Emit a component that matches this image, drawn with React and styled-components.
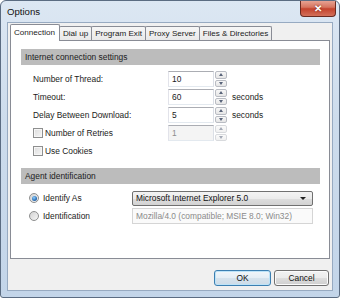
import React from 'react'
import styled, { createGlobalStyle } from 'styled-components'

const GlobalStyle = createGlobalStyle`
	html, body {
		margin: 0;
		padding: 0;
		background: #ffffff;
	}
	body {
		font-family: "Liberation Sans", Arial, sans-serif;
		font-size: 8.4px;
		color: #1b1b1b;
	}
	* {
		box-sizing: border-box;
	}
`

const Window = styled.div`
	width: 340px;
	height: 298px;
	border: 1px solid #5b6c82;
	border-radius: 6px 6px 3px 3px;
	background: linear-gradient(180deg, #dce7f3 0%, #cddcec 40%, #c3d5e9 100%);
	padding: 0 6px 6px 6px;
	display: flex;
	flex-direction: column;
	overflow: hidden;
`

const TitleBar = styled.div`
	height: 21px;
	display: flex;
	justify-content: space-between;
	align-items: flex-start;
`

const Title = styled.div`
	font-size: 9.6px;
	color: #111;
	padding-top: 5px;
`

const CloseButton = styled.div`
	width: 36px;
	height: 17px;
	margin-top: -1px;
	margin-right: -3px;
	border: 1px solid #6a2a20;
	border-top: none;
	border-radius: 0 0 4px 4px;
	background: linear-gradient(180deg, #e9a99a 0%, #d67560 45%, #c4432d 55%, #d3705a 100%);
	color: #fff;
	font-size: 10px;
	font-weight: bold;
	display: flex;
	align-items: center;
	justify-content: center;
	text-shadow: 0 0 2px #6a1c10;
`

const Client = styled.div`
	flex: 1;
	background: #f0f0f0;
	border: 1px solid #97aac1;
	padding: 1px 2px 2px 2px;
	display: flex;
	flex-direction: column;
`

const TabStrip = styled.div`
	height: 16px;
	display: flex;
	align-items: flex-end;
	position: relative;
	z-index: 1;
`

const Tab = styled.div`
	height: ${p => (p.$active ? '17px' : '14px')};
	margin-bottom: ${p => (p.$active ? '-1px' : '0')};
	margin-left: ${p => (p.$first ? '0' : '-1px')};
	padding: ${p => (p.$active ? '2px 4px 0 3px' : '1px 3px 0 3px')};
	border: 1px solid #898c95;
	border-bottom: none;
	border-radius: 2px 2px 0 0;
	background: ${p => (p.$active ? '#ffffff' : 'linear-gradient(180deg, #f6f6f6 0%, #e9e9e9 100%)')};
	font-size: 8.1px;
	white-space: nowrap;
	line-height: 11px;
	position: relative;
	z-index: ${p => (p.$active ? 2 : 1)};
`

const Panel = styled.div`
	flex: 1;
	background: #ffffff;
	border: 1px solid #898c95;
	padding: 8px 9px 0 10px;
`

const SectionHeader = styled.div`
	height: 16px;
	line-height: 16px;
	background: #bcbcbc;
	padding-left: 4px;
	color: #1b1b1b;
`

const Rows = styled.div`
	display: flex;
	flex-direction: column;
	gap: 2px;
	margin-top: ${p => p.$top}px;
	margin-bottom: ${p => p.$bottom || 0}px;
`

const Row = styled.div`
	height: 16px;
	display: flex;
	align-items: center;
`

const Label = styled.label`
	width: ${p => p.$width}px;
	padding-left: ${p => p.$indent}px;
	display: flex;
	align-items: center;
	gap: 2px;
	white-space: nowrap;
`

const NumberBox = styled.div`
	width: 46px;
	height: 16px;
	border: 1px solid;
	border-color: #abadb3 #dbdfe6 #e3e9ef #e2e3ea;
	background: ${p => (p.$disabled ? '#f4f4f4' : '#ffffff')};
	color: ${p => (p.$disabled ? '#8d8d8d' : '#1b1b1b')};
	padding-left: 3px;
	line-height: 14px;
`

const Spinner = styled.div`
	width: 12px;
	height: 16px;
	margin-left: 1px;
	display: flex;
	flex-direction: column;
	gap: 1px;
	opacity: ${p => (p.$disabled ? 0.55 : 1)};
`

const SpinHalf = styled.div`
	flex: 1;
	border: 1px solid #b9bcc3;
	border-radius: 2px;
	background: linear-gradient(180deg, #f7f7f7 0%, #e6e6e6 100%);
	display: flex;
	align-items: center;
	justify-content: center;

	&::after {
		content: '';
		border-left: 2.5px solid transparent;
		border-right: 2.5px solid transparent;
		${p => (p.$up ? 'border-bottom: 3px solid #59647a;' : 'border-top: 3px solid #59647a;')}
	}
`

const Unit = styled.span`
	margin-left: 5px;
`

const Check = styled.span`
	width: 10px;
	height: 10px;
	border: 1px solid #8e8f8f;
	background: linear-gradient(135deg, #dcdcdc 0%, #f6f6f6 100%);
	box-shadow: inset 0 0 0 1px #f6f6f6;
	flex: none;
`

const Radio = styled.span`
	width: 10px;
	height: 10px;
	border-radius: 50%;
	border: 1px solid #8e8f8f;
	background: linear-gradient(135deg, #d2d2d2 0%, #f6f6f6 100%);
	flex: none;
	display: flex;
	align-items: center;
	justify-content: center;
	margin-right: 2px;

	&::after {
		content: '';
		width: 5px;
		height: 5px;
		border-radius: 50%;
		display: ${p => (p.$checked ? 'block' : 'none')};
		background: radial-gradient(circle at 40% 35%, #8fd0ff 0%, #2d6fb5 60%, #18437d 100%);
	}
`

const Select = styled.div`
	width: 181px;
	height: 15px;
	border: 1px solid #707070;
	border-radius: 2px;
	background: linear-gradient(180deg, #f3f3f3 0%, #ebebeb 50%, #dddddd 51%, #d3d3d3 100%);
	display: flex;
	align-items: center;
	justify-content: space-between;
	padding: 0 6px 0 3px;
	color: #111;

	&::after {
		content: '';
		border-left: 3px solid transparent;
		border-right: 3px solid transparent;
		border-top: 3px solid #222;
	}
`

const TextField = styled.div`
	width: 181px;
	height: 16px;
	border: 1px solid #d5d5d5;
	background: #fafafa;
	color: #8a8a8a;
	padding-left: 3px;
	line-height: 14px;
	white-space: nowrap;
`

const Footer = styled.div`
	height: 29px;
	display: flex;
	justify-content: flex-end;
	align-items: flex-start;
	gap: 3px;
	padding: 11px 1px 0 0;
`

const Button = styled.div`
	width: ${p => p.$width}px;
	height: 16px;
	border: 1px solid ${p => (p.$default ? '#3c7fb1' : '#707070')};
	border-radius: 3px;
	background: ${p =>
		p.$default
			? 'linear-gradient(180deg, #f1f6fa 0%, #e5eef5 50%, #d6e3ed 51%, #cddbe7 100%)'
			: 'linear-gradient(180deg, #f2f2f2 0%, #ebebeb 50%, #dddddd 51%, #cfcfcf 100%)'};
	box-shadow: inset 0 0 0 1px ${p => (p.$default ? '#bde3f8' : '#fbfbfb')};
	display: flex;
	align-items: center;
	justify-content: center;
	color: #111;
`

const tabs = ['Connection', 'Dial up', 'Program Exit', 'Proxy Server', 'Files & Directories']

const NumberField = ({ value, disabled }) => (
	<>
		<NumberBox $disabled={disabled}>{value}</NumberBox>
		<Spinner $disabled={disabled}>
			<SpinHalf $up />
			<SpinHalf />
		</Spinner>
	</>
)

const App = () => (
	<>
		<GlobalStyle />
		<Window>
			<TitleBar>
				<Title>Options</Title>
				<CloseButton>✕</CloseButton>
			</TitleBar>
			<Client>
				<TabStrip>
					{tabs.map((t, i) => (
						<Tab key={t} $active={i === 0} $first={i === 0}>{t}</Tab>
					))}
				</TabStrip>
				<Panel>
					<SectionHeader>Internet connection settings</SectionHeader>
					<Rows $top={6} $bottom={9}>
						<Row>
							<Label $width={147} $indent={12}>Number of Thread:</Label>
							<NumberField value="10" />
						</Row>
						<Row>
							<Label $width={147} $indent={12}>Timeout:</Label>
							<NumberField value="60" />
							<Unit>seconds</Unit>
						</Row>
						<Row>
							<Label $width={147} $indent={12}>Delay Between Download:</Label>
							<NumberField value="5" />
							<Unit>seconds</Unit>
						</Row>
						<Row>
							<Label $width={147} $indent={12}><Check />Number of Retries</Label>
							<NumberField value="1" disabled />
						</Row>
						<Row>
							<Label $width={147} $indent={12}><Check />Use Cookies</Label>
						</Row>
					</Rows>
					<SectionHeader>Agent identification</SectionHeader>
					<Rows $top={6}>
						<Row>
							<Label $width={111} $indent={8}><Radio $checked />Identify As</Label>
							<Select>Microsoft Internet Explorer 5.0</Select>
						</Row>
						<Row>
							<Label $width={111} $indent={8}><Radio />Identification</Label>
							<TextField>Mozilla/4.0 (compatible; MSIE 8.0; Win32)</TextField>
						</Row>
					</Rows>
				</Panel>
				<Footer>
					<Button $width={57} $default>OK</Button>
					<Button $width={55}>Cancel</Button>
				</Footer>
			</Client>
		</Window>
	</>
)

export default App
